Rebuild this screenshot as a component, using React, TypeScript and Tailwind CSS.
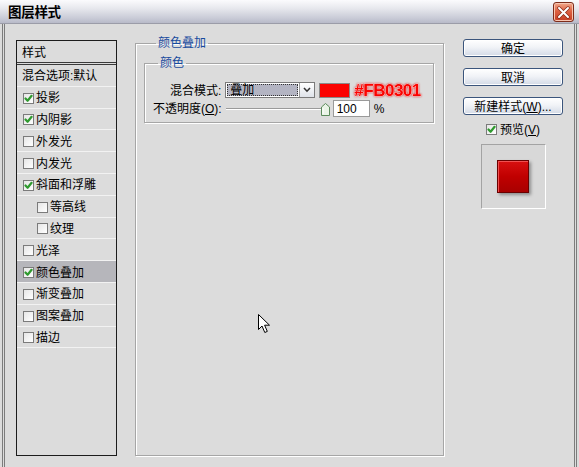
import React from "react";

const Check = () => (
  <svg width="9" height="9" viewBox="0 0 9 9" className="block">
    <path d="M1.5 4.5 L3.6 6.8 L7.6 1.8" fill="none" stroke="#2f9a2f" strokeWidth="2.2" strokeLinecap="round" strokeLinejoin="round" />
  </svg>
);

const Box = ({ on }: { on: boolean }) => (
  <span className="w-[11px] h-[11px] shrink-0 border border-[#7b7b7b] bg-[linear-gradient(135deg,#e6e6e6,#ffffff)] flex items-center justify-center">
    {on ? <Check /> : null}
  </span>
);

type Row = { label: string; cb: boolean | null; indent?: boolean; sel?: boolean };

const rows: Row[] = [
  { label: "混合选项:默认", cb: null },
  { label: "投影", cb: true },
  { label: "内阴影", cb: true },
  { label: "外发光", cb: false },
  { label: "内发光", cb: false },
  { label: "斜面和浮雕", cb: true },
  { label: "等高线", cb: false, indent: true },
  { label: "纹理", cb: false, indent: true },
  { label: "光泽", cb: false },
  { label: "颜色叠加", cb: true, sel: true },
  { label: "渐变叠加", cb: false },
  { label: "图案叠加", cb: false },
  { label: "描边", cb: false },
];

const Btn = ({ children }: { children: React.ReactNode }) => (
  <div className="w-full h-[18px] pt-[1px] rounded-[3px] border border-[#3b557c] bg-[linear-gradient(to_bottom,#ffffff,#f1f3f7_45%,#d3dae6)] shadow-[inset_0_0_0_1px_#ffffff] flex items-center justify-center text-[12px] leading-none text-black">
    {children}
  </div>
);

export default function App() {
  return (
    <div className="w-[579px] h-[467px] bg-[#dcdcdc] flex flex-col overflow-hidden relative font-['Liberation_Sans','Noto_Sans_CJK_SC',sans-serif] text-[12px] text-black">
      {/* title bar */}
      <div className="h-[24px] shrink-0 flex items-center justify-between pl-[8px] pr-[5px] bg-[linear-gradient(to_bottom,#fbfbfd,#e8e9ee_35%,#c8cad6_80%,#b8bac8)] border-b border-[#9b9ca8]">
        <span className="text-[13.5px] pt-[2px] font-bold leading-none tracking-[-0.3px]">图层样式</span>
        <div className="w-[21px] h-[20px] mt-[1px] rounded-[3px] border border-[#7d2c1a] bg-[linear-gradient(to_bottom,#f2a98c,#dd6142_45%,#c43d24)] shadow-[inset_0_0_0_1px_#f7c4b0] flex items-center justify-center">
          <svg width="13" height="13" viewBox="0 0 13 13">
            <path d="M2 2 L11 11 M11 2 L2 11" stroke="#8a2a18" strokeWidth="3.4" strokeLinecap="round" />
            <path d="M2 2 L11 11 M11 2 L2 11" stroke="#ffffff" strokeWidth="2" strokeLinecap="round" />
          </svg>
        </div>
      </div>

      {/* body */}
      <div className="flex-1 flex items-start mx-[2px] border-x-[3px] border-double border-[#7c7c7c] pl-[11px] pr-[11px] pt-[11px]">
        {/* left list */}
        <div className="mt-[5px] w-[101px] h-[416px] shrink-0 border border-[#1c1c1c] flex flex-col">
          <div className="h-[24px] shrink-0 pt-[2px] border-b-[3px] border-double border-[#3a3a3a] flex items-center pl-[5px] leading-none">
            样式
          </div>
          {rows.map((r) => (
            <div
              key={r.label}
              className={`h-[21.8px] shrink-0 pt-[2px] border-b border-[#f2f2f2] flex items-center leading-none ${
                r.sel ? "bg-[#b6b6bb]" : ""
              } ${r.cb === null ? "pl-[5px]" : r.indent ? "pl-[20px] gap-[2px]" : "pl-[6px] gap-[2px]"}`}
            >
              {r.cb !== null ? <Box on={r.cb} /> : null}
              <span>{r.label}</span>
            </div>
          ))}
        </div>

        {/* middle fieldset */}
        <fieldset className="ml-[18px] w-[309px] h-[421px] shrink-0 border border-[#a6a6a6] shadow-[inset_1px_1px_0_#ffffff,1px_1px_0_#ffffff] pl-[8px] pr-[9px] min-w-0">
          <legend className="ml-[12px] px-[2px] text-[#174a9e] leading-[16px]">颜色叠加</legend>
          <fieldset className="mt-[4px] w-[290px] border border-[#a6a6a6] shadow-[inset_1px_1px_0_#ffffff,1px_1px_0_#ffffff] pb-[5px] min-w-0">
            <legend className="ml-[13px] px-[2px] text-[#174a9e] leading-[16px]">颜色</legend>
            {/* row 1 */}
            <div className="mt-[11px] h-[16px] flex items-center pl-[25px]">
              <span className="leading-none pt-[1px]">混合模式:</span>
              <div className="ml-[4px] w-[90px] h-[16px] border border-[#7a7a7a] bg-white flex">
                <div className="flex-1 m-[1px] bg-[#b3b4c2] border border-dotted border-[#333] flex items-center pl-[2px] leading-none">
                  叠加
                </div>
                <div className="w-[15px] border-l border-[#9a9a9a] bg-[linear-gradient(to_bottom,#ffffff,#dfe3ea)] flex items-center justify-center">
                  <svg width="8" height="6" viewBox="0 0 8 6">
                    <path d="M1 1 L4 4.2 L7 1" fill="none" stroke="#333" strokeWidth="1.6" />
                  </svg>
                </div>
              </div>
              <div className="ml-[4px] w-[31px] h-[15px] bg-[#fb0301] border border-[#8a8a8a]" />
              <span className="ml-[4px] text-[17px] font-bold leading-none tracking-[-0.5px] text-[#fb0301] [-webkit-text-stroke:0.6px_#ffffff] [paint-order:stroke_fill] drop-shadow-[0_0_1px_#e00000]">
                #FB0301
              </span>
            </div>
            {/* row 2 */}
            <div className="mt-[2px] h-[17px] flex items-center pl-[8px]">
              <span className="leading-none pt-[1px]">
                不透明度(<span className="underline">O</span>):
              </span>
              <div className="ml-[4px] w-[104px] h-[14px] relative">
                <div className="absolute left-0 right-[4px] top-[6px] h-[2px] border-t border-[#9a9a9a] border-b border-b-white" />
                <svg className="absolute right-0 top-[1px]" width="9" height="13" viewBox="0 0 9 13">
                  <path d="M0.5 4 L4.5 0.5 L8.5 4 L8.5 12.5 L0.5 12.5 Z" fill="#e9f3e6" stroke="#5c8a5c" />
                  <path d="M2 5 L2 11" stroke="#ffffff" />
                </svg>
              </div>
              <div className="ml-[3px] w-[37px] h-[17px] border border-[#9a9a9a] bg-white flex items-center pl-[3px] leading-none">
                100
              </div>
              <span className="ml-[4px] leading-none">%</span>
            </div>
          </fieldset>
        </fieldset>

        {/* right column */}
        <div className="ml-[19px] mt-[4px] w-[100px] shrink-0 flex flex-col items-center">
          <Btn>确定</Btn>
          <div className="h-[11px]" />
          <Btn>取消</Btn>
          <div className="h-[11px]" />
          <Btn>
            新建样式(<span className="underline">W</span>)...
          </Btn>
          <div className="mt-[7px] h-[14px] flex items-center gap-[3px] leading-none">
            <Box on={true} />
            <span className="pt-[1px]">
              预览(<span className="underline">V</span>)
            </span>
          </div>
          <div className="mt-[8px] w-[65px] h-[65px] border border-t-[#a3a3a3] border-l-[#a3a3a3] border-r-white border-b-white bg-[#d8d8d8] flex items-center justify-center">
            <div className="w-[32px] h-[33px] border border-[#6a0000] bg-[linear-gradient(to_bottom,#d81010,#c00000_50%,#a80000)] shadow-[inset_1px_1px_0_#f05050,2px_2px_3px_rgba(0,0,0,0.35)]" />
          </div>
        </div>
      </div>

      {/* mouse cursor */}
      <svg className="absolute left-[258px] top-[314px]" width="13" height="20" viewBox="0 0 13 20">
        <path d="M0.5 0.5 L0.5 15.5 L4 12 L6.8 18.5 L9.3 17.4 L6.6 11.2 L11.5 11.2 Z" fill="#ffffff" stroke="#000000" strokeLinejoin="round" />
      </svg>
    </div>
  );
}
